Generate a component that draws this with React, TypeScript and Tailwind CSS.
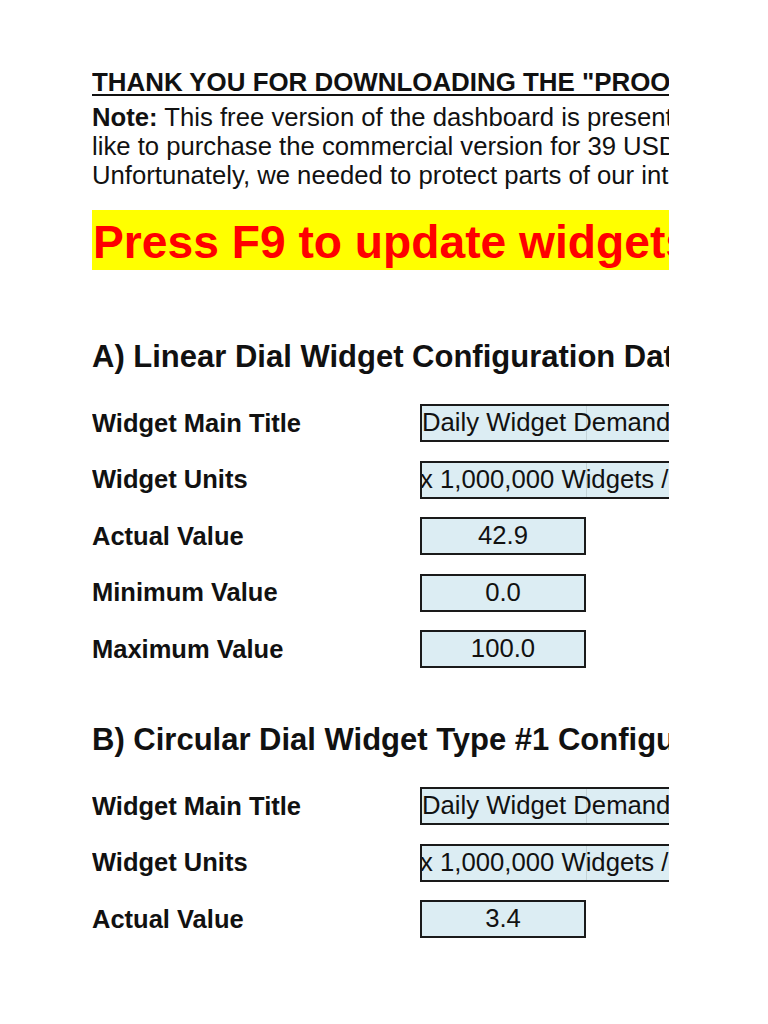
import React from "react";

const font = { fontFamily: '"Liberation Sans", Arial, sans-serif' };

type Row = { label: string; value: string; wide?: boolean };

const sectionA: Row[] = [
  { label: "Widget Main Title", value: "Daily Widget Demand Gauge", wide: true },
  { label: "Widget Units", value: "x 1,000,000 Widgets / Day", wide: true },
  { label: "Actual Value", value: "42.9" },
  { label: "Minimum Value", value: "0.0" },
  { label: "Maximum Value", value: "100.0" },
];

const sectionB: Row[] = [
  { label: "Widget Main Title", value: "Daily Widget Demand Gauge", wide: true },
  { label: "Widget Units", value: "x 1,000,000 Widgets / Day", wide: true },
  { label: "Actual Value", value: "3.4" },
];

function InputCell({ value, wide }: { value: string; wide?: boolean }) {
  if (wide) {
    return (
      <div className="relative h-[38px] w-[330px] shrink-0 border-2 border-[#1a1a1a] bg-[#dcedf3] flex items-center overflow-hidden">
        <span className="absolute left-[164px] top-0 bottom-0 w-px bg-[#c4d3d8]" />
        <span className={`relative whitespace-nowrap text-[25.7px] leading-none text-[#111] ${value.startsWith("x") ? "-ml-[2px]" : ""}`}>
          {value}
        </span>
      </div>
    );
  }
  return (
    <div className="h-[38px] w-[166px] shrink-0 border-2 border-[#1a1a1a] bg-[#dcedf3] flex items-center justify-center">
      <span className="text-[25.7px] leading-none text-[#111]">{value}</span>
    </div>
  );
}

function Section({ title, rows, top }: { title: string; rows: Row[]; top: string }) {
  return (
    <div className={top}>
      <h2 className="h-[40px] leading-[40px] whitespace-nowrap text-[31px] font-bold text-[#111]">{title}</h2>
      <div className="mt-[27px] flex flex-col gap-[18.5px]">
        {rows.map((r, i) => (
          <div key={i} className="flex items-center h-[38px]">
            <div className="w-[328px] shrink-0 text-[25.5px] font-bold text-[#111] whitespace-nowrap">{r.label}</div>
            <InputCell value={r.value} wide={r.wide} />
          </div>
        ))}
      </div>
    </div>
  );
}

export default function App() {
  return (
    <div className="w-[768px] h-[1024px] bg-white overflow-hidden" style={font}>
      <div className="ml-[92px] w-[577px] overflow-hidden pt-[67px]">
        <div className="h-[30px] leading-[30px] whitespace-nowrap text-[25.9px] font-bold underline text-[#111] decoration-[2px] underline-offset-[3px]">
          THANK YOU FOR DOWNLOADING THE "PROOF OF CONCEPT" DASHBOARD
        </div>
        <div className="mt-[5.5px] whitespace-nowrap text-[25.7px] leading-[29px] text-[#111]">
          <div>
            <span className="font-bold">Note:</span> This free version of the dashboard is presented for evaluation purposes. If you would
          </div>
          <div>like to purchase the commercial version for 39 USD, please visit our website.</div>
          <div>Unfortunately, we needed to protect parts of our intellectual property in this version.</div>
        </div>
        <div className="mt-[20.5px] h-[60px] bg-[#ffff00] flex items-center pt-[4px] pl-[1px] whitespace-nowrap text-[46.2px] leading-none font-bold text-[#ff0000]">
          Press F9 to update widgets
        </div>
        <Section title="A) Linear Dial Widget Configuration Data" rows={sectionA} top="mt-[67px]" />
        <Section title="B) Circular Dial Widget Type #1 Configuration Data" rows={sectionB} top="mt-[52px]" />
      </div>
    </div>
  );
}
